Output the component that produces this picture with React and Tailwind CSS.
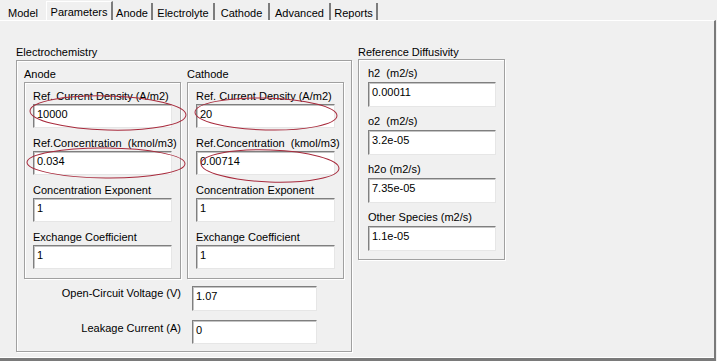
import React from "react";

function Field({ w, h = 24, value }) {
  return (
    <div
      className="bg-white border border-t-[#7f7f7f] border-l-[#7f7f7f] border-r-[#e6e6e6] border-b-[#e6e6e6] shadow-[inset_1px_1px_0_#c4c4c4] pl-[3px] pt-[2px] leading-[14px] text-black"
      style={{ width: w, height: h }}
    >
      {value}
    </div>
  );
}

function Labeled({ label, value, first, w = 139, h = 24, gap = 1, spacing = 8 }) {
  return (
    <div className={first ? "" : ""} style={{ marginTop: first ? 0 : spacing }}>
      <div className="h-[14px] leading-[14px] whitespace-pre">{label}</div>
      <div style={{ marginTop: gap }}>
        <Field w={w} h={h} value={value} />
      </div>
    </div>
  );
}

const boxCls =
  "border border-[#a0a0a0] shadow-[inset_1px_1px_0_#ffffff,1px_1px_0_#ffffff]";

function ElectrodeBox({ title, fields }) {
  return (
    <div className="w-[157px]">
      <div className="h-[14px] leading-[14px]">{title}</div>
      <div className={`${boxCls} mt-[1px] pt-[6px] pl-[8px] pb-[9px]`}>
        {fields.map((f, i) => (
          <Labeled key={i} label={f[0]} value={f[1]} first={i === 0} />
        ))}
      </div>
    </div>
  );
}

const tabs = [
  { t: "Model", w: 46 },
  { t: "Parameters", w: 67, sel: true },
  { t: "Anode", w: 40 },
  { t: "Electrolyte", w: 62 },
  { t: "Cathode", w: 55 },
  { t: "Advanced", w: 61 },
  { t: "Reports", w: 47 },
];

export default function App() {
  return (
    <div className="relative w-[717px] h-[361px] overflow-hidden bg-[#f0f0f0] text-black text-[11px] leading-[14px] font-['Liberation_Sans',Arial,sans-serif] flex flex-col">
      {/* Tabs */}
      <div className="h-[20px] flex items-end shrink-0">
        {tabs.map((tb, i) => (
          <div
            key={tb.t}
            style={{ width: tb.w }}
            className={
              tb.sel
                ? "h-[19px] pt-[3px] text-center leading-[14px] border-l border-t border-l-white border-t-white border-r-2 border-r-[#7c7c7c]"
                : i === 0
                ? "h-[17px] pt-[3px] text-center leading-[14px]"
                : "h-[17px] pt-[3px] text-center leading-[14px] border-r-2 border-r-[#7c7c7c]"
            }
          >
            {tb.t}
          </div>
        ))}
      </div>

      {/* Panel */}
      <div className="w-[716px] flex-1 border-t border-t-white border-r-2 border-r-[#7a7a7a] border-b-[3px] border-b-[#7a7a7a] shadow-[inset_0_-1px_0_#ffffff]">
        <div className="flex pt-[24px] pl-[16px]">
          {/* Electrochemistry */}
          <div className="w-[336px]">
            <div className="h-[14px] leading-[14px]">Electrochemistry</div>
            <div className={`${boxCls} mt-[1px] pt-[6px] pl-[7px] pb-[7px]`}>
              <div className="flex gap-[6px]">
                <ElectrodeBox
                  title="Anode"
                  fields={[
                    ["Ref. Current Density (A/m2)", "10000"],
                    ["Ref.Concentration  (kmol/m3)", "0.034"],
                    ["Concentration Exponent", "1"],
                    ["Exchange Coefficient", "1"],
                  ]}
                />
                <ElectrodeBox
                  title="Cathode"
                  fields={[
                    ["Ref. Current Density (A/m2)", "20"],
                    ["Ref.Concentration  (kmol/m3)", "0.00714"],
                    ["Concentration Exponent", "1"],
                    ["Exchange Coefficient", "1"],
                  ]}
                />
              </div>
              <div className="mt-[7px] flex items-start -ml-[7px]">
                <div className="w-[164px] text-right leading-[14px]">Open-Circuit Voltage (V)</div>
                <div className="ml-[11px]">
                  <Field w={125} h={25} value="1.07" />
                </div>
              </div>
              <div className="mt-[9px] flex items-start -ml-[7px]">
                <div className="w-[164px] text-right leading-[14px] pt-[1px]">Leakage Current (A)</div>
                <div className="ml-[11px]">
                  <Field w={125} h={24} value="0" />
                </div>
              </div>
            </div>
          </div>

          {/* Reference Diffusivity */}
          <div className="ml-[6px] w-[147px]">
            <div className="h-[14px] leading-[14px]">Reference Diffusivity</div>
            <div className={`${boxCls} pt-[6px] pl-[9px] pb-[8px]`}>
              {[
                ["h2  (m2/s)", "0.00011"],
                ["o2  (m2/s)", "3.2e-05"],
                ["h2o (m2/s)", "7.35e-05"],
                ["Other Species (m2/s)", "1.1e-05"],
              ].map((f, i) => (
                <Labeled
                  key={i}
                  label={f[0]}
                  value={f[1]}
                  first={i === 0}
                  w={128}
                  h={25}
                  gap={2}
                  spacing={7}
                />
              ))}
            </div>
          </div>
        </div>
      </div>

      {/* Red annotation ellipses */}
      <svg
        className="absolute left-0 top-0 pointer-events-none"
        width="717"
        height="361"
        viewBox="0 0 717 361"
      >
        <g fill="none" stroke="#a82a3c" strokeWidth="1">
          <ellipse cx="108" cy="113" rx="78" ry="17" transform="rotate(1.5 108 113)" />
          <ellipse cx="266" cy="114" rx="71" ry="16" transform="rotate(1.5 266 114)" />
          <ellipse cx="106" cy="163" rx="79" ry="15" transform="rotate(0.5 106 163)" />
          <ellipse cx="270" cy="166" rx="69" ry="16" transform="rotate(2 270 166)" />
        </g>
      </svg>
    </div>
  );
}
